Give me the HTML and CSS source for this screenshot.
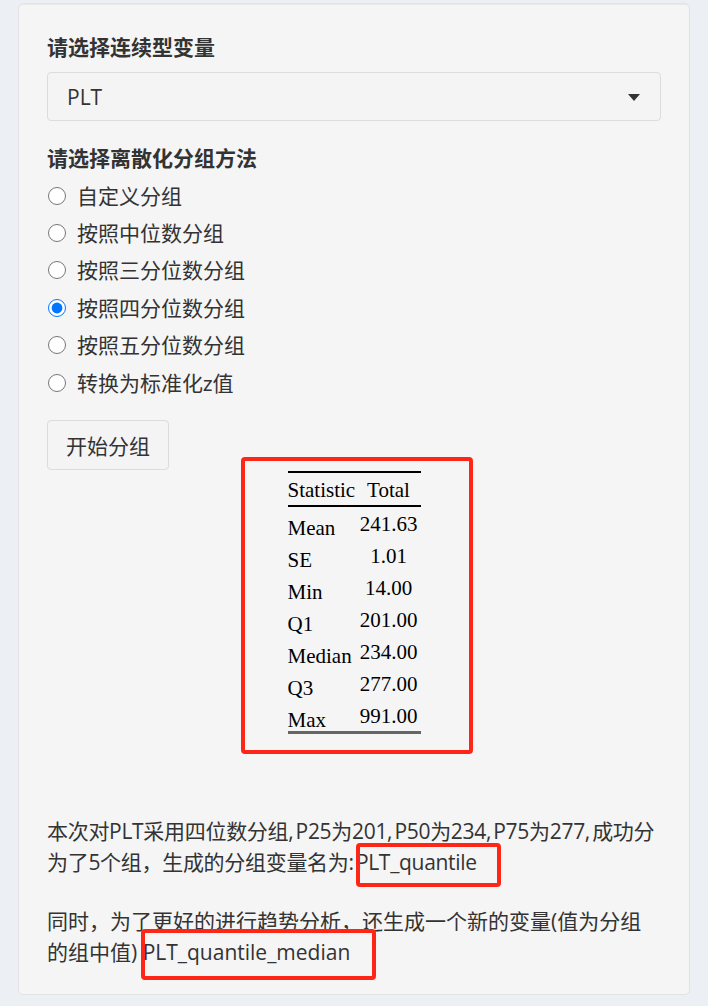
FILE: index.html
```html
<!DOCTYPE html>
<html lang="zh">
<head>
<meta charset="utf-8">
<title>离散化分组</title>
<link rel="stylesheet" href="styles.css">
</head>
<body>
<div class="well">
  <div class="form-group">
    <label class="ctl-label">请选择连续型变量</label>
    <div class="select">
      <span class="select-value">PLT</span>
      <span class="caret"></span>
    </div>
  </div>

  <div class="form-group radios">
    <label class="ctl-label">请选择离散化分组方法</label>
    <label class="radio"><input type="radio" name="m"><span>自定义分组</span></label>
    <label class="radio"><input type="radio" name="m"><span>按照中位数分组</span></label>
    <label class="radio"><input type="radio" name="m"><span>按照三分位数分组</span></label>
    <label class="radio"><input type="radio" name="m" checked><span>按照四分位数分组</span></label>
    <label class="radio"><input type="radio" name="m"><span>按照五分位数分组</span></label>
    <label class="radio"><input type="radio" name="m"><span>转换为标准化z值</span></label>
  </div>

  <button class="btn" type="button">开始分组</button>

  <table class="stats">
    <thead>
      <tr><th class="c1">Statistic</th><th class="c2">Total</th></tr>
    </thead>
    <tbody>
      <tr><td class="c1">Mean</td><td class="c2">241.63</td></tr>
      <tr><td class="c1">SE</td><td class="c2">1.01</td></tr>
      <tr><td class="c1">Min</td><td class="c2">14.00</td></tr>
      <tr><td class="c1">Q1</td><td class="c2">201.00</td></tr>
      <tr><td class="c1">Median</td><td class="c2">234.00</td></tr>
      <tr><td class="c1">Q3</td><td class="c2">277.00</td></tr>
      <tr><td class="c1">Max</td><td class="c2">991.00</td></tr>
    </tbody>
  </table>

  <div class="result">
    <p class="summary">本次对PLT采用四位数分组, P25为201, P50为234, P75为277, 成功分为了5个组，生成的分组变量名为: PLT_quantile</p>
    <p>同时，为了更好的进行趋势分析，还生成一个新的变量(值为分组的组中值) PLT_quantile_median</p>
  </div>

  <div class="mark mark-table"></div>
  <div class="mark mark-var"></div>
  <div class="mark mark-median"></div>
</div>
</body>
</html>
```

FILE: styles.css
```css
html, body {
  margin: 0;
  padding: 0;
}
body {
  background: #ecf0f5;
  font-family: "Lato", "Noto Sans CJK SC", sans-serif;
  color: #333;
  font-size: 21px;
  width: 708px;
  height: 1006px;
  overflow: hidden;
}
.well {
  position: relative;
  box-sizing: border-box;
  margin: 3px 18px 0 18px;
  width: 672px;
  height: 992px;
  background: #f5f5f5;
  border: 1px solid #e3e3e3;
  border-radius: 5px;
  box-shadow: inset 0 1px 1px rgba(0,0,0,0.05);
  padding: 29px 28px 0 28px;
}
.form-group {
  display: flex;
  flex-direction: column;
}
.ctl-label {
  font-weight: 700;
  font-size: 21px;
  line-height: 28px;
  height: 28px;
  margin-bottom: 11px;
  color: #333;
}
.select {
  box-sizing: border-box;
  height: 49px;
  border: 1px solid #dcdcdc;
  border-radius: 4px;
  background: #f4f4f4;
  display: flex;
  align-items: center;
  justify-content: space-between;
  padding: 0 20px 0 19px;
}
.select-value {
  font-family: "Open Sans", "Noto Sans CJK SC", sans-serif;
  font-size: 21px;
  line-height: 28px;
  color: #333;
}
.caret {
  width: 0;
  height: 0;
  border-left: 6px solid transparent;
  border-right: 6px solid transparent;
  border-top: 7px solid #333;
  margin-top: 1px;
}
.radios {
  margin-top: 23px;
}
.radios .ctl-label {
  margin-bottom: 5px;
}
.radio {
  display: flex;
  align-items: center;
  height: 37.4px;
  font-size: 21px;
  line-height: 28px;
  color: #333;
}
.radio input {
  width: 18px;
  height: 18px;
  margin: 0 11px 0 1px;
}
.btn {
  display: block;
  margin-top: 19px;
  box-sizing: border-box;
  height: 50px;
  width: 122px;
  border: 1px solid #dcdcdc;
  border-radius: 4px;
  background: #f4f4f4;
  font-family: "Lato", "Noto Sans CJK SC", sans-serif;
  font-size: 21px;
  color: #333;
  padding: 0;
}
.stats {
  margin: 1px auto 0 auto;
  border-collapse: collapse;
  table-layout: fixed;
  font-family: "Liberation Serif", "Times New Roman", serif;
  font-size: 21px;
  color: #000;
  border-top: 2px solid #000;
  border-bottom: 3px solid #666;
  width: 133px;
}
.stats thead tr {
  border-bottom: 2px solid #000;
}
.stats th,
.stats td {
  padding: 0;
  box-sizing: border-box;
  font-weight: 400;
  white-space: nowrap;
}
.stats th {
  height: 34px;
  line-height: 25px;
  padding-top: 5px;
  vertical-align: top;
}
.stats td {
  height: 32px;
}
.stats td.c1 {
  line-height: 22px;
  padding-top: 10px;
  vertical-align: top;
}
.stats td.c2 {
  line-height: 25px;
  padding-top: 5px;
  vertical-align: top;
}
.stats .c1 {
  text-align: left;
  width: 69px;
}
.stats .c2 {
  text-align: center;
  width: 64px;
}
.result {
  margin-top: 82px;
}
.result p {
  margin: 0 0 28px 0;
  font-family: "Open Sans", "Noto Sans CJK SC", sans-serif;
  font-size: 21px;
  line-height: 31px;
  color: #333;
}
.result p.summary {
  letter-spacing: -0.3px;
  word-spacing: -3px;
}
.mark {
  position: absolute;
  box-sizing: border-box;
  border: 4px solid #fe2617;
  border-radius: 4px;
  pointer-events: none;
}
.mark-table {
  left: 222px;
  top: 453px;
  width: 232px;
  height: 297px;
}
.mark-var {
  left: 337px;
  top: 839px;
  width: 145px;
  height: 44px;
}
.mark-median {
  left: 122px;
  top: 925px;
  width: 235px;
  height: 51px;
}
```
